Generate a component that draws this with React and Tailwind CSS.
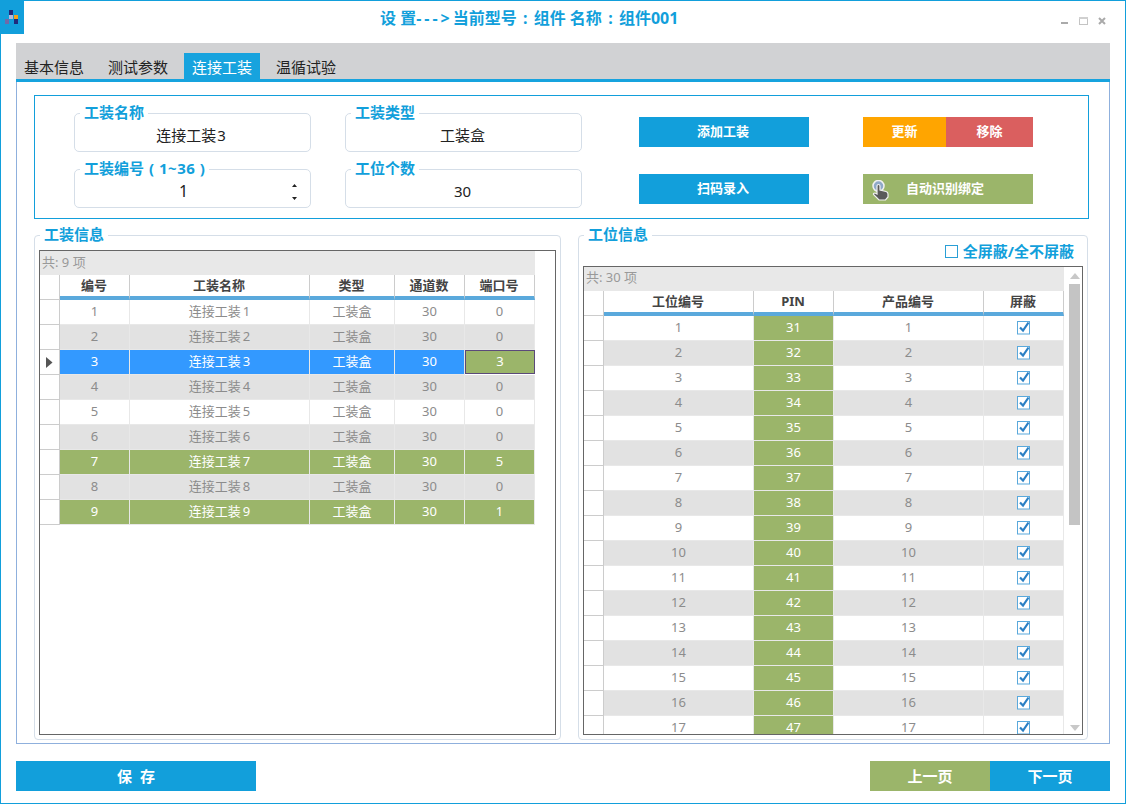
const font = "font-['Noto_Sans','Noto_Sans_CJK_SC',sans-serif]";

const toolRows = [
  { id: 1, port: 0 },
  { id: 2, port: 0 },
  { id: 3, port: 3, selected: true },
  { id: 4, port: 0 },
  { id: 5, port: 0 },
  { id: 6, port: 0 },
  { id: 7, port: 5, bound: true },
  { id: 8, port: 0 },
  { id: 9, port: 1, bound: true },
];

const stationRows = Array.from({ length: 17 }, (_, i) => i + 1);

function Field({ label, className, children }) {
  return (
    <div className={`relative h-[39px] w-[237px] rounded-[5px] border border-[#d5dee8] flex items-center justify-center pt-[5px] ${className || ''}`}>
      <span className="absolute left-[5px] -top-[12px] bg-white px-[4px] text-[15px] leading-[20px] font-bold text-[#129fdb] whitespace-nowrap">{label}</span>
      {children}
    </div>
  );
}

function ActionButton({ className, children }) {
  return (
    <button className={`h-[30px] flex items-center justify-center text-[13px] font-bold text-white ${className}`}>
      {children}
    </button>
  );
}

function HeadCell({ className, children }) {
  return (
    <div className={`h-[25px] bg-white border-r border-[#cccccc] border-b-[4px] border-b-[#5aa9dc] flex items-center justify-center text-[13px] font-bold text-[#444444] pr-[1px] ${className}`}>
      {children}
    </div>
  );
}

function Cell({ className, children }) {
  return (
    <div className={`h-[25px] border-r border-b border-[#e8e8e8] flex items-center justify-center text-[13px] ${className}`}>
      {children}
    </div>
  );
}

function RowHead({ active }) {
  return (
    <div className="h-[25px] w-[20px] shrink-0 border-r border-b border-[#cccccc] bg-white flex items-center justify-center">
      {active && (
        <svg width="7" height="11" viewBox="0 0 7 11"><path d="M0 0 L6.5 5.5 L0 11 Z" fill="#555555" /></svg>
      )}
    </div>
  );
}

function Check() {
  return (
    <svg width="14" height="14" viewBox="0 0 14 14">
      <rect x="0.5" y="0.5" width="12" height="12.5" fill="#ffffff" stroke="#5aa9dc" />
      <path d="M3 6.5 L6 9.5 L11.5 1.5" fill="none" stroke="#2a7fc4" strokeWidth="2.2" />
    </svg>
  );
}

function ToolGrid() {
  return (
    <div className="mx-[4px] mt-[14px] h-[485px] border border-[#666666] overflow-hidden">
      <div className="h-[24px] w-[495px] bg-[#e8e8e8] pl-[2px] text-[13px] leading-[22px] text-[#999999]">共: 9 项</div>
      <div className="flex">
        <div className="h-[25px] w-[20px] shrink-0 border-r border-b border-[#cccccc] bg-white" />
        <HeadCell className="w-[70px]">编号</HeadCell>
        <HeadCell className="w-[180px]">工装名称</HeadCell>
        <HeadCell className="w-[85px]">类型</HeadCell>
        <HeadCell className="w-[70px]">通道数</HeadCell>
        <HeadCell className="w-[70px]">端口号</HeadCell>
      </div>
      {toolRows.map((row) => {
        const rowColor = row.selected
          ? 'bg-[#3399ff] text-white'
          : row.bound
            ? 'bg-[#9bb56a] text-white'
            : row.id % 2 === 0
              ? 'bg-[#e2e2e2] text-[#8c8c8c]'
              : 'bg-white text-[#8c8c8c]';
        return (
          <div key={row.id} className="flex">
            <RowHead active={row.selected} />
            <Cell className={`w-[70px] ${rowColor}`}>{row.id}</Cell>
            <Cell className={`w-[180px] ${rowColor}`}>连接工装<span className="ml-[2px]">{row.id}</span></Cell>
            <Cell className={`w-[85px] ${rowColor}`}>工装盒</Cell>
            <Cell className={`w-[70px] ${rowColor}`}>30</Cell>
            {row.selected ? (
              <div className="h-[24px] w-[70px] bg-[#9bb56a] text-white text-[13px] border border-[#5b4a7a] flex items-center justify-center">{row.port}</div>
            ) : (
              <Cell className={`w-[70px] ${rowColor}`}>{row.port}</Cell>
            )}
          </div>
        );
      })}
    </div>
  );
}

function StationGrid() {
  return (
    <div className="mx-[4px] mt-[1px] h-[469px] border border-[#666666] overflow-hidden flex">
      <div className="w-[480px] shrink-0">
        <div className="h-[24px] bg-[#e8e8e8] pl-[2px] text-[13px] leading-[21px] text-[#999999]">共: 30 项</div>
        <div className="flex">
          <div className="h-[25px] w-[20px] shrink-0 border-r border-b border-[#cccccc] bg-white" />
          <HeadCell className="w-[150px]">工位编号</HeadCell>
          <HeadCell className="w-[80px]">PIN</HeadCell>
          <HeadCell className="w-[150px]">产品编号</HeadCell>
          <HeadCell className="w-[80px]">屏蔽</HeadCell>
        </div>
        {stationRows.map((n) => {
          const rowColor = n % 2 === 0 ? 'bg-[#e2e2e2] text-[#8c8c8c]' : 'bg-white text-[#8c8c8c]';
          return (
            <div key={n} className="flex">
              <RowHead />
              <Cell className={`w-[150px] ${rowColor}`}>{n}</Cell>
              <Cell className="w-[80px] bg-[#9bb56a] text-white">{n + 30}</Cell>
              <Cell className={`w-[150px] ${rowColor}`}>{n}</Cell>
              <Cell className={`w-[80px] ${rowColor}`}><Check /></Cell>
            </div>
          );
        })}
      </div>
      {/* scrollbar */}
      <div className="flex-1 flex flex-col items-center pl-[3px] pt-[6px] pb-[3px]">
        <svg width="10" height="6" viewBox="0 0 10 6"><path d="M5 0 L10 6 L0 6 Z" fill="#c8c8c8" /></svg>
        <div className="mt-[5px] h-[241px] w-[11px] bg-[#c4c4c4]" />
        <svg className="mt-auto" width="10" height="6" viewBox="0 0 10 6"><path d="M0 0 L10 0 L5 6 Z" fill="#c8c8c8" /></svg>
      </div>
    </div>
  );
}

export default function App() {
  return (
    <div className={`relative w-[1126px] h-[804px] bg-white border border-[#129fdb] overflow-hidden flex flex-col px-[15px] ${font}`}>
      {/* title bar */}
      <div className="h-[42px] shrink-0 -mx-[15px] flex items-start">
        <div className="-ml-px -mt-px h-[34px] w-[24px] bg-[#129fdb] shrink-0 flex items-center justify-center">
          <svg width="14" height="15" viewBox="0 0 14 15">
            <rect x="4" y="0" width="4" height="5" fill="#1f2a7c" />
            <rect x="4" y="5" width="4" height="4" fill="#b5b8dd" />
            <rect x="9" y="5" width="4" height="4" fill="#f7a11a" />
            <rect x="9" y="9" width="4" height="5" fill="#1f2a7c" />
            <rect x="0" y="9" width="4" height="5" fill="#6f6aa8" />
          </svg>
        </div>
        <div className="ml-[356px] mt-[5px] text-[16px] leading-[24px] font-bold text-[#129fdb] whitespace-nowrap">
          设 置<span className="tracking-[3px]">---&gt;</span>当前型号<span className="inline-block w-[17px] text-center">:</span>组件 名称<span className="inline-block w-[17px] text-center">:</span>组件001
        </div>
        <div className="ml-auto mr-[19px] mt-[15px] flex items-center gap-[10px]">
          <svg width="8" height="9" viewBox="0 0 8 9"><rect x="0" y="6" width="7" height="2" fill="#aaaaaa" /></svg>
          <svg width="9" height="8" viewBox="0 0 9 8"><rect x="0.5" y="0.5" width="8" height="7" fill="none" stroke="#c4c4c4" /><rect x="0" y="0" width="9" height="2" fill="#d0d0d0" /></svg>
          <svg width="8" height="8" viewBox="0 0 8 8"><path d="M1 1 L7 7 M7 1 L1 7" stroke="#aaaaaa" strokeWidth="2" /></svg>
        </div>
      </div>

      {/* tabs */}
      <div className="h-[39px] shrink-0 bg-[#d1d2d4] border-b-[3px] border-[#17a3de] flex items-end gap-[8px] text-[15px]">
        <div className="w-[76px] h-[26px] pt-[3px] flex items-center justify-center text-[#222222]">基本信息</div>
        <div className="w-[76px] h-[26px] pt-[3px] flex items-center justify-center text-[#222222]">测试参数</div>
        <div className="w-[76px] h-[26px] pt-[3px] flex items-center justify-center bg-[#17a3de] text-white">连接工装</div>
        <div className="w-[76px] h-[26px] pt-[3px] flex items-center justify-center text-[#222222]">温循试验</div>
      </div>

      {/* panel */}
      <div className="h-[662px] shrink-0 border border-t-0 border-[#8fb0dd] pl-[17px] pr-[20px] pt-[13px]">
        <div className="h-[124px] border border-[#129fdb] pl-[39px] pt-[17px] flex flex-col gap-[17px]">
          <div className="flex items-start">
            <Field label="工装名称"><span className="text-[15px] text-[#222222] -ml-[3px]">连接工装<span className="ml-[1px]">3</span></span></Field>
            <Field label="工装类型" className="ml-[34px]"><span className="text-[15px] text-[#222222] -ml-[2px]">工装盒</span></Field>
            <ActionButton className="ml-[57px] mt-[4px] w-[170px] bg-[#129fdb] pr-[2px]">添加工装</ActionButton>
            <div className="ml-[54px] mt-[4px] flex">
              <ActionButton className="w-[83px] bg-[#ffa500]">更新</ActionButton>
              <ActionButton className="w-[87px] bg-[#da5f5f]">移除</ActionButton>
            </div>
          </div>
          <div className="flex items-start">
            <Field label={<>工装编号<span className="ml-[5px] tracking-[0.5px]">( 1~36 )</span></>}>
              <span className="text-[16px] text-[#222222] -ml-[18px]">1</span>
              <svg className="absolute right-[12px] top-[14px]" width="7" height="17" viewBox="0 0 7 17">
                <path d="M3.5 0 L6 3 L1 3 Z M1 13 L6 13 L3.5 16 Z" fill="#222222" />
              </svg>
            </Field>
            <Field label="工位个数" className="ml-[34px]"><span className="text-[15px] text-[#222222] -ml-[2px]">30</span></Field>
            <ActionButton className="ml-[57px] mt-[5px] w-[170px] bg-[#129fdb] pr-[2px]">扫码录入</ActionButton>
            <ActionButton className="relative ml-[54px] mt-[5px] w-[170px] bg-[#9bb56a] pr-[6px]">
              <svg className="absolute left-[9px] top-[6px]" width="17" height="21" viewBox="0 0 17 21">
                <circle cx="6.5" cy="6" r="5.5" fill="#8fa9c9" stroke="#f0f0f0" strokeWidth="1.5" />
                <path d="M5 6 Q5 4.5 6.5 4.5 Q8 4.5 8 6 V10 L14 11.5 Q16 12 16 14 V17 L13.5 20 H7 L1.5 14.5 Q1 13 3 13 L5 14 Z" fill="#5a5a5a" stroke="#f0f0f0" strokeWidth="1.2" />
              </svg>
              自动识别绑定
            </ActionButton>
          </div>
        </div>

        <div className="mt-[16px] flex gap-[17px]">
          <div className="relative h-[505px] w-[527px] rounded-[4px] border border-[#d5dee8]">
            <span className="absolute left-[5px] -top-[12px] bg-white px-[4px] text-[15px] leading-[20px] font-bold text-[#129fdb]">工装信息</span>
            <ToolGrid />
          </div>
          <div className="relative h-[505px] w-[510px] rounded-[4px] border border-[#d5dee8]">
            <span className="absolute left-[5px] -top-[12px] bg-white px-[4px] text-[15px] leading-[20px] font-bold text-[#129fdb]">工位信息</span>
            <div className="h-[29px] flex items-center justify-end pr-[13px] pt-[2px] gap-[5px]">
              <span className="h-[13px] w-[13px] border border-[#2a9fd6] bg-white" />
              <span className="text-[15px] font-bold text-[#129fdb]">全屏蔽/全不屏蔽</span>
            </div>
            <StationGrid />
          </div>
        </div>
      </div>

      {/* footer */}
      <div className="mt-[17px] flex justify-between">
        <button className="h-[30px] w-[240px] bg-[#129fdb] text-[15px] font-bold text-white">保&nbsp;&nbsp;存</button>
        <div className="flex">
          <button className="h-[30px] w-[120px] bg-[#9bb56a] text-[15px] font-bold text-white">上一页</button>
          <button className="h-[30px] w-[120px] bg-[#129fdb] text-[15px] font-bold text-white">下一页</button>
        </div>
      </div>
    </div>
  );
}
